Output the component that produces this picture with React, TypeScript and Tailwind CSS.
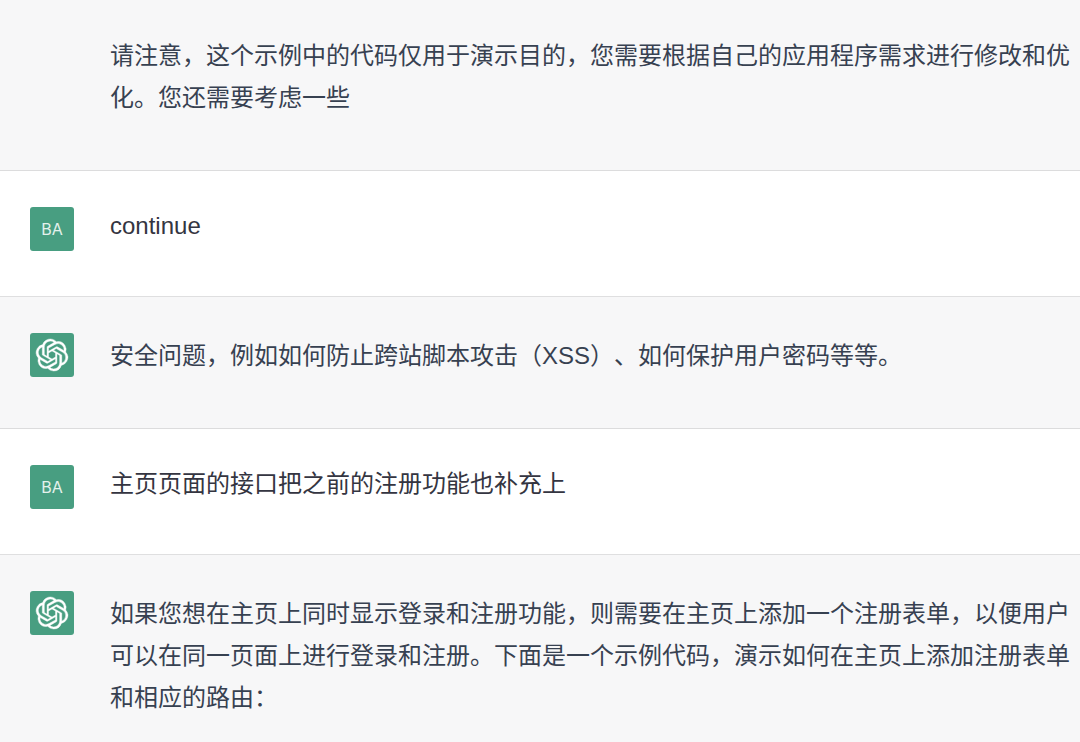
import React from "react";
import { SiOpenai } from "react-icons/si";

type Message = { id: number; role: "assistant" | "user"; text: string };

const messages: Message[] = [
  { id: 2, role: "user", text: "continue" },
  { id: 3, role: "assistant", text: "安全问题，例如如何防止跨站脚本攻击（XSS）、如何保护用户密码等等。" },
  { id: 4, role: "user", text: "主页页面的接口把之前的注册功能也补充上" },
  {
    id: 5,
    role: "assistant",
    text: "如果您想在主页上同时显示登录和注册功能，则需要在主页上添加一个注册表单，以便用户可以在同一页面上进行登录和注册。下面是一个示例代码，演示如何在主页上添加注册表单和相应的路由：",
  },
];

function Avatar({ role }: { role: Message["role"] }) {
  return (
    <div className="flex size-11 shrink-0 items-center justify-center rounded-[3px] bg-[#489e81] font-['Inter',sans-serif] text-base text-[#e4f1ec]">
      {role === "user" ? (
        "BA"
      ) : (
        <SiOpenai className="size-8 overflow-visible stroke-white stroke-[0.3px] text-white" aria-label="ChatGPT" />
      )}
    </div>
  );
}

function Row({ message }: { message: Message }) {
  const user = message.role === "user";
  return (
    <article
      className={
        user
          ? "flex gap-9 border-b border-[#dfdfe0] bg-white pt-9 pr-2 pb-[45px] pl-[30px] leading-[38px] text-[#343541]"
          : "flex gap-9 border-b border-[#dcdcdd] bg-[#f7f7f8] pt-9 pr-2 pb-[51px] pl-[30px] text-[#374151]"
      }
    >
      <Avatar role={message.role} />
      <p className={user ? "min-w-0 flex-1" : "min-w-0 flex-1 pt-0.5"}>{message.text}</p>
    </article>
  );
}

export default function App() {
  return (
    <main
      lang="zh-CN"
      className="min-h-screen bg-[#f7f7f8] font-['Liberation_Sans','Noto_Sans_CJK_SC',sans-serif] text-2xl leading-[42px] [text-spacing-trim:space-all]"
    >
      <article className="border-b border-[#dcdcdd] pt-[35px] pr-2 pb-[51px] pl-[110px] text-[#374151]">
        <p>请注意，这个示例中的代码仅用于演示目的，您需要根据自己的应用程序需求进行修改和优化。您还需要考虑一些</p>
      </article>
      {messages.map((message) => (
        <Row key={message.id} message={message} />
      ))}
    </main>
  );
}
